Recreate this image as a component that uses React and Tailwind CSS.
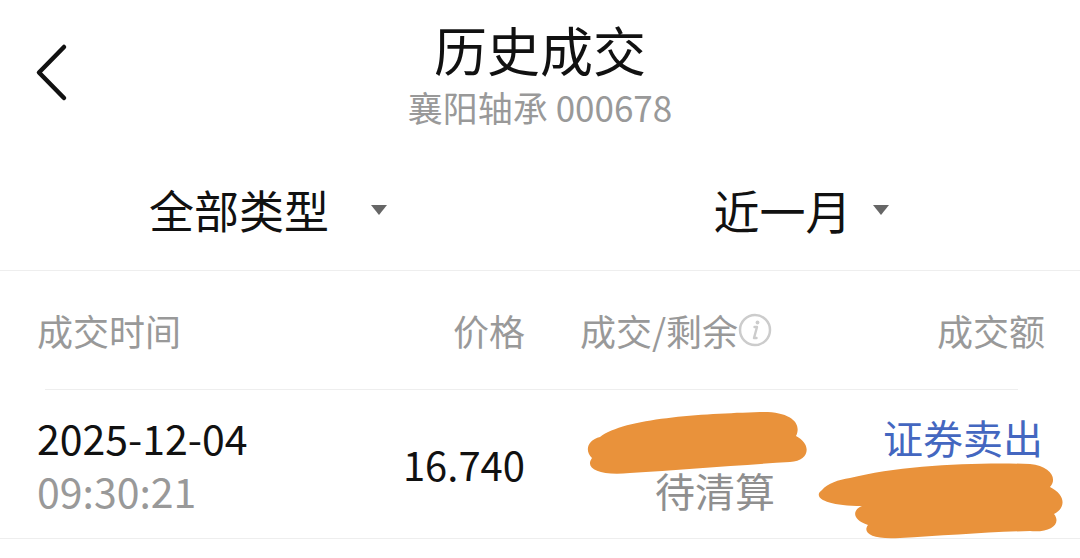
import React from 'react';

const font = { fontFamily: '"Noto Sans CJK SC", "Noto Sans", sans-serif' };

function BackIcon() {
    return (
        <svg width="40" height="60" viewBox="0 0 40 60" fill="none">
            <path d="M32 4 L7 29.5 L32 55" stroke="#111" strokeWidth="4.5" strokeLinecap="round" strokeLinejoin="round" />
        </svg>
    );
}

function Caret() {
    return (
        <svg width="16" height="10" viewBox="0 0 16 10">
            <path d="M0 0 H16 L8 10 Z" fill="#666" />
        </svg>
    );
}

function InfoIcon() {
    return (
        <svg width="34" height="34" viewBox="0 0 34 34" fill="none">
            <circle cx="17" cy="17" r="15" stroke="#cccccc" strokeWidth="2.5" />
            <circle cx="19.5" cy="9.5" r="1.9" fill="#cccccc" />
            <path d="M16.5 14 L19 14 L16 25 L18.5 25" stroke="#cccccc" strokeWidth="2.4" strokeLinecap="round" strokeLinejoin="round" />
        </svg>
    );
}

// orange redaction scribbles laid over the row
function Scribbles() {
    return (
        <svg className="absolute inset-0 pointer-events-none" width="1080" height="558" viewBox="0 0 1080 558">
            <path
                d="M600,437 C625,418 700,414 760,412 C792,411 802,424 796,436 C812,444 810,461 790,462 C740,465 680,470 630,473 C600,476 584,469 592,458 C584,450 588,440 600,437 Z"
                fill="#e9923b"
            />
            <path
                d="M850,478 C900,465 980,462 1030,464 C1050,466 1058,478 1050,487 C1066,495 1066,508 1054,514 C1062,524 1050,533 1030,531 C990,532 940,536 900,538 C872,540 862,533 868,525 C852,520 852,510 862,506 C825,506 812,497 822,490 C828,483 838,480 850,478 Z"
                fill="#e9923b"
            />
        </svg>
    );
}

export default function App() {
    return (
        <div className="relative w-[1080px] h-[558px] bg-white overflow-hidden" style={font}>
            {/* Header */}
            <div className="grid grid-cols-[120px_1fr_120px] h-[140px]">
                <div className="flex items-start pl-[32px] pt-[43px]">
                    <BackIcon />
                </div>
                <div className="flex flex-col items-center pt-[19px]">
                    <div className="text-[53px] leading-[60px] text-[#111]">历史成交</div>
                    <div className="mt-[6px] text-[35px] leading-[44px] text-[#999]">襄阳轴承 000678</div>
                </div>
                <div />
            </div>

            {/* Filters */}
            <div className="grid grid-cols-2 h-[131px] pt-[9px] border-b border-[#eeeeee]">
                <div className="flex items-center justify-center gap-[42px] pr-[4px]">
                    <span className="text-[45px] text-[#111]">全部类型</span>
                    <Caret />
                </div>
                <div className="flex items-center justify-center gap-[21px] pr-[18px]">
                    <span className="text-[46px] text-[#111]">近一月</span>
                    <Caret />
                </div>
            </div>

            {/* Table header */}
            <div className="flex items-center h-[118px] pl-[37px] pr-[35px] text-[36px] text-[#999]">
                <div className="w-[250px]">成交时间</div>
                <div className="w-[238px] text-right">价格</div>
                <div className="ml-[55px] w-[220px] flex items-center">
                    <span>成交/剩余</span>
                    <InfoIcon />
                </div>
                <div className="flex-1 text-right">成交额</div>
            </div>
            <div className="ml-[45px] mr-[62px] border-b border-[#eeeeee]" />

            {/* Row */}
            <div className="flex items-center h-[149px] pl-[37px] pr-[37px] border-b border-[#eeeeee]">
                <div className="w-[250px] text-[41px] leading-[53px]">
                    <div className="text-[#111]">2025-12-04</div>
                    <div className="text-[#999]">09:30:21</div>
                </div>
                <div className="w-[238px] text-right text-[40px] text-[#111]">16.740</div>
                <div className="ml-[55px] w-[220px] text-[40px] leading-[53px] pl-[75px]">
                    <div className="h-[53px]" />
                    <div className="text-[#8f8f8f]">待清算</div>
                </div>
                <div className="flex-1 text-right text-[40px] leading-[53px]">
                    <div className="text-[#4467c0]">证券卖出</div>
                    <div className="h-[53px]" />
                </div>
            </div>

            <Scribbles />
        </div>
    );
}
